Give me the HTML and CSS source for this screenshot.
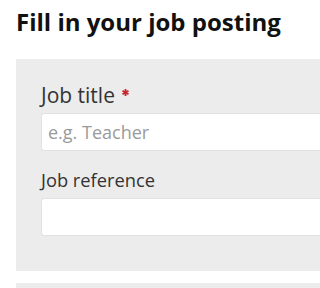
FILE: index.html
```html
<!DOCTYPE html>
<html>
<head>
<meta charset="utf-8">
<link rel="stylesheet" href="styles.css">
</head>
<body>
<h1 class="title">Fill in your job posting</h1>
<div class="panel">
  <label class="label label-main">Job title <svg class="req" viewBox="0 0 10 10" width="7" height="7"><g stroke="#c8232c" stroke-width="2.6" stroke-linecap="butt"><line x1="5" y1="0" x2="5" y2="10"/><line x1="0.7" y1="2.5" x2="9.3" y2="7.5"/><line x1="0.7" y1="7.5" x2="9.3" y2="2.5"/></g></svg></label>
  <div class="input"><span class="placeholder">e.g. Teacher</span></div>
  <label class="label label-sub">Job reference</label>
  <div class="input"></div>
</div>
<div class="panel panel-next"></div>
</body>
</html>
```
FILE: styles.css
```css
html, body {
  margin: 0;
  padding: 0;
  background: #fff;
  overflow: hidden;
}
body {
  padding: 7px 0 0 16px;
  height: 288px;
  box-sizing: border-box;
  font-family: "Open Sans", "Liberation Sans", sans-serif;
}
.title {
  margin: 0 0 22px 0;
  font-size: 24px;
  line-height: 30px;
  font-weight: 700;
  color: #111;
  white-space: nowrap;
}
.panel {
  background: #ececec;
  padding: 22px 0 35px 25px;
}
.label {
  display: block;
  color: #333;
}
.label-main {
  font-size: 21px;
  line-height: 28px;
  margin-bottom: 4px;
}
.label-sub {
  font-size: 18.3px;
  line-height: 24px;
  margin: 17px 0 6px 0;
}
.req {
  vertical-align: 7px;
  margin-left: 2px;
}
.input {
  box-sizing: border-box;
  height: 38px;
  background: #fff;
  border: 1px solid #e2e2e2;
  border-right: 0;
  border-radius: 3px 0 0 3px;
  padding: 0 6px;
  display: flex;
  align-items: center;
}
.placeholder {
  font-size: 18px;
  color: #9a9a9a;
}
.panel-next {
  margin-top: 12px;
  height: 5px;
  padding: 0;
}
```
